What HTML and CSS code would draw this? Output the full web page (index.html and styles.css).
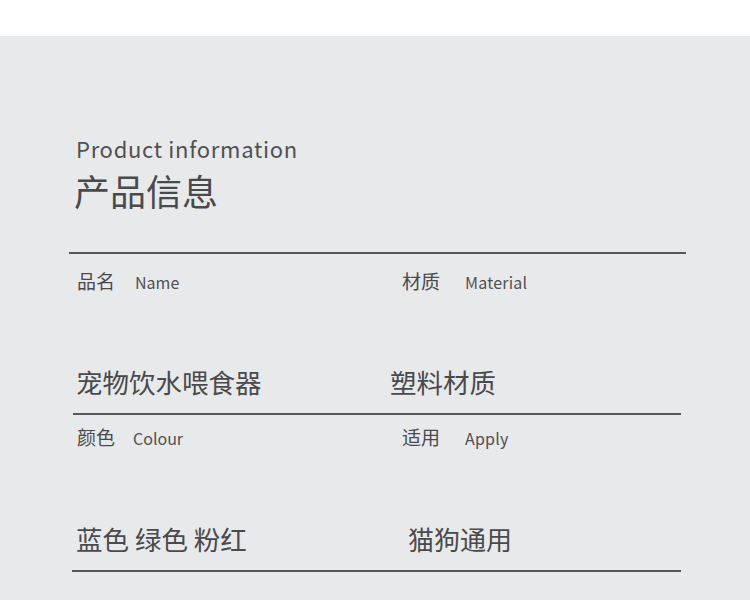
FILE: index.html
```html
<!DOCTYPE html>
<html lang="zh-CN">
<head>
<meta charset="utf-8">
<title>产品信息</title>
<link rel="stylesheet" href="styles.css">
</head>
<body>
<div class="page">
  <div class="top"></div>
  <section class="panel">
    <header class="heading">
      <div class="heading-en">Product information</div>
      <h1 class="heading-cn">产品信息</h1>
    </header>
    <hr class="rule rule-1">
    <div class="row labels labels-1">
      <div class="label label-left"><span class="cn">品名</span><span class="en">Name</span></div>
      <div class="label label-right"><span class="cn">材质</span><span class="en en-r">Material</span></div>
    </div>
    <div class="row values values-1">
      <div class="value value-left">宠物饮水喂食器</div>
      <div class="value value-right v1r">塑料材质</div>
    </div>
    <hr class="rule rule-2">
    <div class="row labels labels-2">
      <div class="label label-left"><span class="cn">颜色</span><span class="en en-colour">Colour</span></div>
      <div class="label label-right"><span class="cn">适用</span><span class="en en-r">Apply</span></div>
    </div>
    <div class="row values values-2">
      <div class="value value-left">蓝色 绿色 粉红</div>
      <div class="value value-right v2r">猫狗通用</div>
    </div>
    <hr class="rule rule-3">
  </section>
</div>
</body>
</html>
```
FILE: styles.css
```css
* { box-sizing: border-box; }
html, body { margin: 0; padding: 0; }
body {
  background: #ffffff;
  font-family: "Noto Sans CJK SC", "Noto Sans", sans-serif;
  color: #4a4a4c;
}
.page { width: 750px; height: 600px; overflow: hidden; }
.top { height: 36px; background: #ffffff; }
.panel {
  background: #e8e9eb;
  height: 564px;
  padding-top: 98px;
}
.heading { padding-left: 76px; }
.heading-en {
  font-size: 22px;
  line-height: 28px;
  letter-spacing: 0.7px;
  color: #505052;
}
.heading-cn {
  margin: 6px 0 0 -2px;
  font-size: 36px;
  line-height: 44px;
  font-weight: 400;
  color: #4a4a4c;
}
.rule {
  border: 0;
  height: 2px;
  background: #58585a;
  margin: 0;
}
.rule-1 { margin: 40px 0 0 69px; width: 617px; }
.rule-2 { margin: 0 0 0 73px; width: 608px; }
.rule-3 { margin: 0 0 0 72px; width: 609px; }
.row { display: flex; }
.labels-1 { margin-top: 15px; }
.labels-2 { margin-top: 10px; }
.label { display: flex; align-items: baseline; }
.label-left { width: 402px; padding-left: 77px; }
.label .cn { font-size: 19px; line-height: 24px; }
.label .en { font-size: 16px; line-height: 24px; margin-left: 20px; color: #505052; }
.label .en-colour { margin-left: 18px; }
.label .en-r { margin-left: 25px; letter-spacing: 0.2px; }
.values { align-items: baseline; }
.values-1 { margin-top: 71px; }
.values-2 { margin-top: 72px; }
.value { font-size: 26.5px; line-height: 34px; }
.value-left { width: 390px; padding-left: 76px; }
.v1r { margin-left: 0; }
.v2r { margin-left: 18px; font-size: 26px; }
.values-1 + .rule-2 { margin-top: 14px; }
.values-2 + .rule-3 { margin-top: 14px; }
```
